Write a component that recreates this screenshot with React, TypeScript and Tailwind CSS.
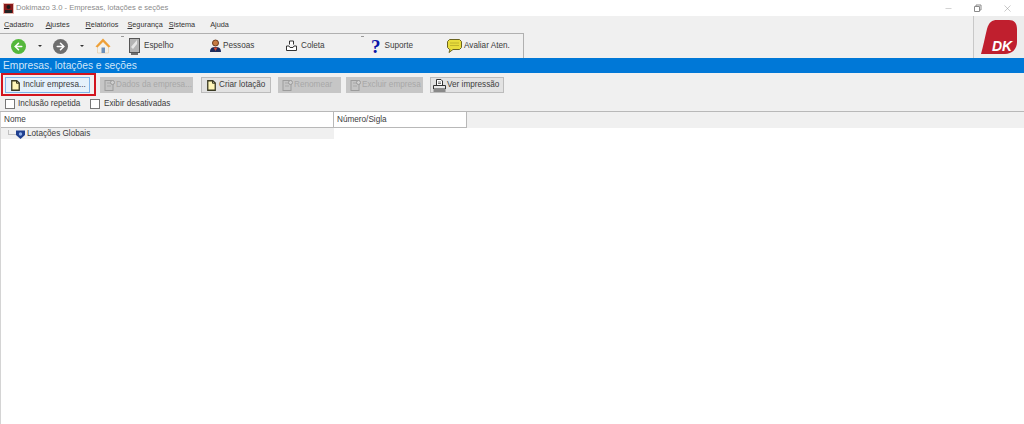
import React from 'react';
import { ArrowLeft, ArrowRight, X, Minus } from 'lucide-react';

const PageIcon = () => (
  <svg width="9" height="11" viewBox="0 0 9 11" className="shrink-0">
    <path d="M.75.75h5L8.250 3v7.250H.75z" fill="#fff6b8" stroke="#3a3a24" strokeWidth="1.300" />
    <path d="M5.500 .75V3.250H8.250" fill="none" stroke="#3a3a24" />
  </svg>
);

const DisabledIcon = () => (
  <svg width="13" height="13" viewBox="0 0 13 13" className="shrink-0">
    <rect x="2" y="1.500" width="8" height="10" fill="#c4c4c4" stroke="#9c9c9c" />
    <path d="M4 4h6M4 7h4" stroke="#a8a8a8" />
    <circle cx="9.500" cy="3.500" r="2" fill="#cfcfcf" stroke="#9c9c9c" />
  </svg>
);

const PrinterIcon = () => (
  <svg width="13" height="13" viewBox="0 0 13 13" className="shrink-0">
    <path d="M3.500 6V.5h4.500l1.500 1.500v4" fill="#fff" stroke="#333" />
    <path d="M.5 6.500h12v3.500H.5z" fill="#e8e8e8" stroke="#333" />
    <path d="M.5 12h12" stroke="#333" />
    <path d="M5 3h3M5 4.500h3" stroke="#777" />
  </svg>
);

const MenuItem = ({ mark, before = '', after, className }: { mark: string; before?: string; after: string; className: string }) => (
  <span className={className}>
    {before}
    <span className="underline">{mark}</span>
    {after}
  </span>
);

const ToolButton = ({ icon, label, className }: { icon: React.ReactNode; label: string; className: string }) => (
  <div className={`flex items-center shrink-0 ${className}`}>
    {icon}
    <span>{label}</span>
  </div>
);

const ActionButton = ({ icon, label, disabled, className }: { icon: React.ReactNode; label: string; disabled?: boolean; className: string }) => (
  <div
    className={`h-[16px] flex items-center border shrink-0 ${className} ${
      disabled ? 'bg-[#c6c6c6] border-[#c6c6c6] text-[#a8a8a8]' : 'bg-[#e2e2e2] border-[#bcbcbc] text-[#3c3c3c]'
    }`}
  >
    {icon}
    <span className="whitespace-nowrap">{label}</span>
  </div>
);

const Checkbox = ({ label, className }: { label: string; className: string }) => (
  <div className={`flex items-center shrink-0 ${className}`}>
    <span className="w-[10px] h-[10px] border border-[#777] bg-white" />
    <span>{label}</span>
  </div>
);

export default function App() {
  return (
    <div
      className="relative w-[1024px] h-[424px] overflow-hidden bg-white text-[8.2px] text-[#3c3c3c]"
      style={{ fontFamily: '"Liberation Sans", Arial, sans-serif' }}
    >
      {/* Title bar */}
      <div className="h-[16px] flex items-center bg-white">
        <svg width="11" height="11" viewBox="0 0 11 11" className="ml-[3px] shrink-0">
          <rect width="11" height="11" fill="#e8b8b0" />
          <rect x="1" y="1" width="9" height="9" fill="#8a1a1a" />
          <circle cx="5.500" cy="4" r="2" fill="#1a1a1a" />
          <rect x="2" y="7" width="7" height="3" fill="#222" />
        </svg>
        <span className="ml-[2px] text-[7.6px] text-[#8b8b8b]">Dokimazo 3.0 - Empresas, lotações e seções</span>
        <div className="ml-auto flex items-center text-[#8a8a8a]">
          <Minus size={9} strokeWidth={1} className="mr-[20px]" />
          <svg width="9" height="9" viewBox="0 0 9 9" className="mr-[20px]">
            <path d="M1.500 2.500h5v5h-5zM3 2.500V1h5v5H6.500" fill="none" stroke="#8a8a8a" />
          </svg>
          <X size={11} strokeWidth={1} className="mr-[11px]" />
        </div>
      </div>

      <div className="h-[42px] flex bg-[#f0f0f0]">
        <div className="flex-1 min-w-0">
          {/* Menu */}
          <div className="h-[17px] pt-[1px] flex items-center text-[#333] text-[7.300px]">
            <MenuItem mark="C" after="adastro" className="ml-[4px]" />
            <MenuItem mark="A" after="justes" className="ml-[12px]" />
            <MenuItem mark="R" after="elatórios" className="ml-[16px]" />
            <MenuItem mark="S" after="egurança" className="ml-[9px]" />
            <MenuItem mark="S" after="istema" className="ml-[6px]" />
            <MenuItem mark="j" before="A" after="uda" className="ml-[15px]" />
          </div>
          {/* Toolbar */}
          <div className="relative w-[524px] h-[25px] flex items-center border-t border-r border-[#b0b0b0]">
            <span className="ml-[11px] w-[15px] h-[15px] rounded-full bg-[#55b83c] flex items-center justify-center shrink-0">
              <ArrowLeft size={11} strokeWidth={3.500} color="#fff" />
            </span>
            <span className="ml-[12px] w-0 h-0 border-x-[2px] border-x-transparent border-t-[2px] border-t-[#333] shrink-0" />
            <span className="ml-[11px] w-[15px] h-[15px] rounded-full bg-[#6e6e6e] flex items-center justify-center shrink-0">
              <ArrowRight size={11} strokeWidth={3.500} color="#fff" />
            </span>
            <span className="ml-[12px] w-0 h-0 border-x-[2px] border-x-transparent border-t-[2px] border-t-[#333] shrink-0" />
            <svg width="16" height="16" viewBox="0 0 16 16" className="ml-[11px] shrink-0">
              <path d="M8 2 2.500 8v7h11V8z" fill="#f4f1ea" stroke="#e2c8a0" strokeWidth=".6" />
              <rect x="6.500" y="9.500" width="3.500" height="5.500" fill="#6c8fb8" />
              <path d="M8 .5 .5 8.500 2.500 9.500 8 4l5.500 5.500 2-1z" fill="#eea038" />
            </svg>
            <ToolButton
              className="ml-[18px] w-[80px] gap-[4px]"
              label="Espelho"
              icon={
                <svg width="11" height="17" viewBox="0 0 11 17">
                  <rect x=".5" y=".5" width="10" height="14" fill="#b4b4b4" stroke="#555" />
                  <path d="m2 9 6-7v4l-4 5z" fill="#e6e6e6" />
                  <path d="M2 16h7" stroke="#444" strokeWidth="1.500" />
                </svg>
              }
            />
            <ToolButton
              className="w-[77px] gap-[1px]"
              label="Pessoas"
              icon={
                <svg width="13" height="14" viewBox="0 0 13 14">
                  <circle cx="6.500" cy="4" r="3" fill="#c97b42" stroke="#6b3a1e" />
                  <path d="M1 13c0-4 2-5 5.500-5S12 9 12 13z" fill="#1f2c5c" />
                  <path d="M4.500 8.500h4L6.500 12z" fill="#d94a30" />
                </svg>
              }
            />
            <ToolButton
              className="w-[85px] gap-[4px]"
              label="Coleta"
              icon={
                <svg width="11" height="11" viewBox="0 0 11 11">
                  <path d="M3.500 4.500V1h4v3.500M.5 6h2.500l1 1.500h3L8 6h2.500v4.500H.5z" fill="#fff" stroke="#333" />
                </svg>
              }
            />
            <ToolButton
              className="w-[76px] gap-[4px]"
              label="Suporte"
              icon={<span className="text-[#0a14a8] text-[19px] leading-none font-bold" style={{ fontFamily: '"Liberation Serif", serif' }}>?</span>}
            />
            <ToolButton
              className="gap-[2px]"
              label="Avaliar Aten."
              icon={
                <svg width="15" height="14" viewBox="0 0 15 14">
                  <path d="M2.500.5h10l2 2v6l-2 2H6l-4 3 1-3H2.500l-2-2v-6z" fill="#e8dc3c" stroke="#6b6420" />
                  <path d="M3 4h9M3 6.500h9" stroke="#c0b42c" />
                </svg>
              }
            />
            {/* tiny toolbar grips */}
            <span className="absolute left-[121px] top-[2px] w-[3px] h-px bg-[#999]" />
            <span className="absolute left-[361px] top-[2px] w-[3px] h-px bg-[#999]" />
          </div>
        </div>
        {/* Logo panel */}
        <div className="w-[51px] border-l border-[#c8c8c8] bg-[#ededed] flex items-center pl-[7px]">
          <svg width="37" height="36" viewBox="0 0 37 36">
            <path
              d="M0 35 C2 28 4 18 6 10 C8 3 11 1 16 1 L28 1 C33 1 36 4 36 10 L36 23 C36 30 31 35 24 35 Z"
              fill="#c01f2e"
            />
            <text x="11" y="32" fill="#fff" fontSize="14" fontWeight="700" fontStyle="italic" fontFamily='"Liberation Sans", Arial, sans-serif'>
              DK
            </text>
          </svg>
        </div>
      </div>

      {/* Blue heading */}
      <div className="h-[15px] pt-[1px] bg-[#0078d7] flex items-center pl-[3px] text-[10.250px] leading-none text-[#d0e6fa]">
        Empresas, lotações e seções
      </div>

      {/* Actions */}
      <div className="h-[39px] bg-[#f0f0f0] border-b border-[#b8b8b8]">
        <div className="h-[23px] flex items-end pb-[3px] pl-[5px]">
          <ActionButton className="w-[85px] pl-[5px] gap-[3px] !bg-[#e5f1fb] !border-[#7eb4ea]" icon={<PageIcon />} label="Incluir empresa..." />
          <ActionButton className="ml-[10px] w-[93px] pl-[2px]" disabled icon={<DisabledIcon />} label="Dados da empresa..." />
          <ActionButton className="ml-[8px] w-[70px] pl-[5px] gap-[3px]" icon={<PageIcon />} label="Criar lotação" />
          <ActionButton className="ml-[7px] w-[63px] pl-[2px]" disabled icon={<DisabledIcon />} label="Renomear" />
          <ActionButton className="ml-[5px] w-[77px] pl-[2px]" disabled icon={<DisabledIcon />} label="Excluir empresa" />
          <ActionButton className="ml-[7px] w-[74px] pl-[2px] gap-[1px]" icon={<PrinterIcon />} label="Ver impressão" />
        </div>
        <div className="h-[15px] pt-[2px] flex items-center pl-[5px]">
          <Checkbox className="w-[85px] gap-[3px]" label="Inclusão repetida" />
          <Checkbox className="gap-[4px]" label="Exibir desativadas" />
        </div>
      </div>

      <div className="border-l border-[#d4d4d4] h-[312px]">
        {/* Table header */}
        <div className="h-[16px] flex bg-[#f0f0f0]">
          <div className="w-[333px] pl-[3px] pt-[1px] flex items-center bg-white border-b border-r border-[#b8b8b8]">Nome</div>
          <div className="w-[133px] pl-[3px] pt-[1px] flex items-center bg-white border-b border-r border-[#b8b8b8]">Número/Sigla</div>
        </div>

        {/* Tree */}
        <div className="w-[333px] h-[11px] pt-[1px] bg-[#f0f0f0] flex items-center pl-[7px]">
          <span className="w-[8px] h-[5px] mb-[4px] border-l border-b border-[#c0c0c0] shrink-0" />
          <svg width="9" height="9" viewBox="0 0 9 9" className="shrink-0">
            <path d="M0 .5h9v4.500L4.500 9 0 5z" fill="#1f3f8f" />
            <circle cx="4.500" cy="4" r="1.700" fill="#8fb0e8" />
          </svg>
          <span className="ml-[2px]">Lotações Globais</span>
        </div>
      </div>

      {/* Red highlight on the screenshot */}
      <div className="absolute left-[1px] top-[73px] w-[95px] h-[23px] border-2 border-[#d2141e]" />
    </div>
  );
}
